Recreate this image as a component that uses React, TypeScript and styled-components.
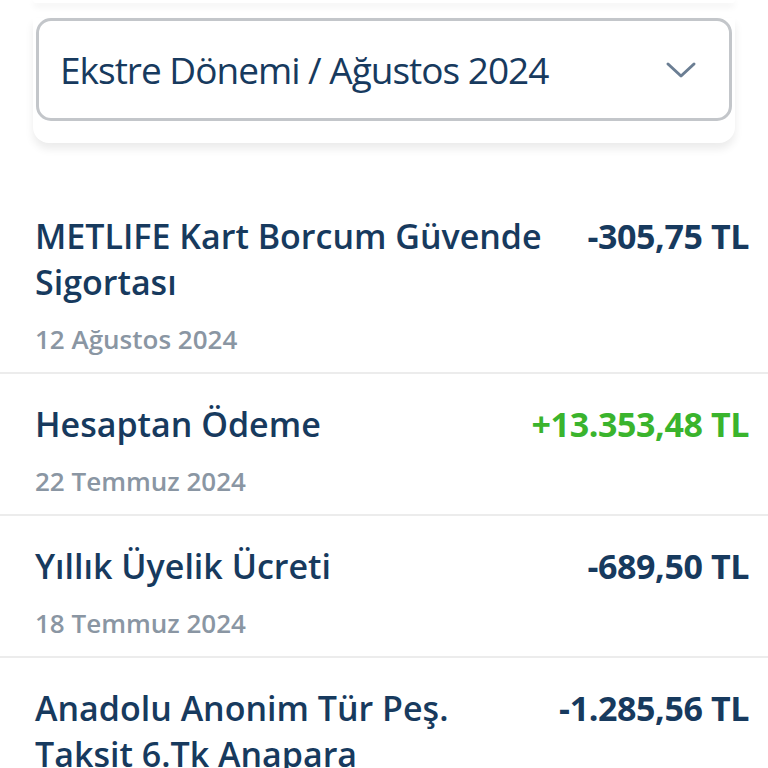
import React from "react";
import styled, { createGlobalStyle } from "styled-components";

const Global = createGlobalStyle`
  html, body { margin: 0; padding: 0; background: #ffffff; }
  body { font-family: "Open Sans", "Noto Sans", sans-serif; overflow: hidden; }
`;

const Page = styled.div`
  width: 768px;
  height: 768px;
  overflow: hidden;
  background: #ffffff;
  display: flex;
  flex-direction: column;
  & > * { flex-shrink: 0; }
`;

const PrevCard = styled.div`
  margin: 0 33px;
  height: 3px;
  background: #ffffff;
  border-radius: 0 0 14px 14px;
  box-shadow: 0 3px 7px rgba(0, 0, 0, 0.09);
`;

const FilterPanel = styled.div`
  margin: 15px 33px 0;
  padding: 0 3px 22px;
  background: #ffffff;
  border-radius: 0 0 16px 16px;
  box-shadow: 0 6px 9px rgba(0, 0, 0, 0.08);
`;

const Dropdown = styled.div`
  height: 97px;
  border: 3px solid #c3c6ca;
  border-radius: 15px;
  display: flex;
  align-items: center;
  justify-content: space-between;
  padding: 0 32px 0 21px;
  background: #ffffff;
`;

const DropdownLabel = styled.span`
  font-size: 37px;
  font-weight: 400;
  color: #173a5e;
  letter-spacing: -1px;
`;

const Chevron = styled.svg`
  width: 32px;
  height: 20px;
  display: block;
`;

const List = styled.div`
  margin-top: 43px;
  display: flex;
  flex-direction: column;
`;

const Row = styled.div`
  display: flex;
  flex-direction: column;
  padding: 27px 19px 16px 35px;
  border-bottom: 2px solid #ececec;
`;

const RowTop = styled.div`
  display: flex;
  justify-content: space-between;
  align-items: flex-start;
`;

const Title = styled.div`
  width: 520px;
  font-size: 34px;
  line-height: 46px;
  font-weight: 600;
  color: #173a5e;
`;

const Amount = styled.div<{ $positive?: boolean }>`
  font-size: 34px;
  line-height: 46px;
  font-weight: 700;
  color: ${(p) => (p.$positive ? "#3ab42d" : "#173a5e")};
  white-space: nowrap;
  letter-spacing: -0.4px;
`;

const DateText = styled.div`
  margin-top: 17px;
  font-size: 26px;
  line-height: 34px;
  font-weight: 600;
  color: #8a96a3;
`;

const items = [
  { title: "METLIFE Kart Borcum Güvende Sigortası", amount: "-305,75 TL", date: "12 Ağustos 2024" },
  { title: "Hesaptan Ödeme", amount: "+13.353,48 TL", date: "22 Temmuz 2024", positive: true },
  { title: "Yıllık Üyelik Ücreti", amount: "-689,50 TL", date: "18 Temmuz 2024" },
  { title: "Anadolu Anonim Tür Peş. Taksit 6.Tk Anapara", amount: "-1.285,56 TL", date: "10 Temmuz 2024" },
];

export default function App() {
  return (
    <Page>
      <Global />
      <PrevCard />
      <FilterPanel>
        <Dropdown>
          <DropdownLabel>Ekstre Dönemi / Ağustos 2024</DropdownLabel>
          <Chevron viewBox="0 0 32 20">
            <path d="M3 4 L16 16 L29 4" fill="none" stroke="#6b7e93" strokeWidth="3" strokeLinecap="round" strokeLinejoin="round" />
          </Chevron>
        </Dropdown>
      </FilterPanel>
      <List>
        {items.map((it) => (
          <Row key={it.title}>
            <RowTop>
              <Title>{it.title}</Title>
              <Amount $positive={it.positive}>{it.amount}</Amount>
            </RowTop>
            <DateText>{it.date}</DateText>
          </Row>
        ))}
      </List>
    </Page>
  );
}
